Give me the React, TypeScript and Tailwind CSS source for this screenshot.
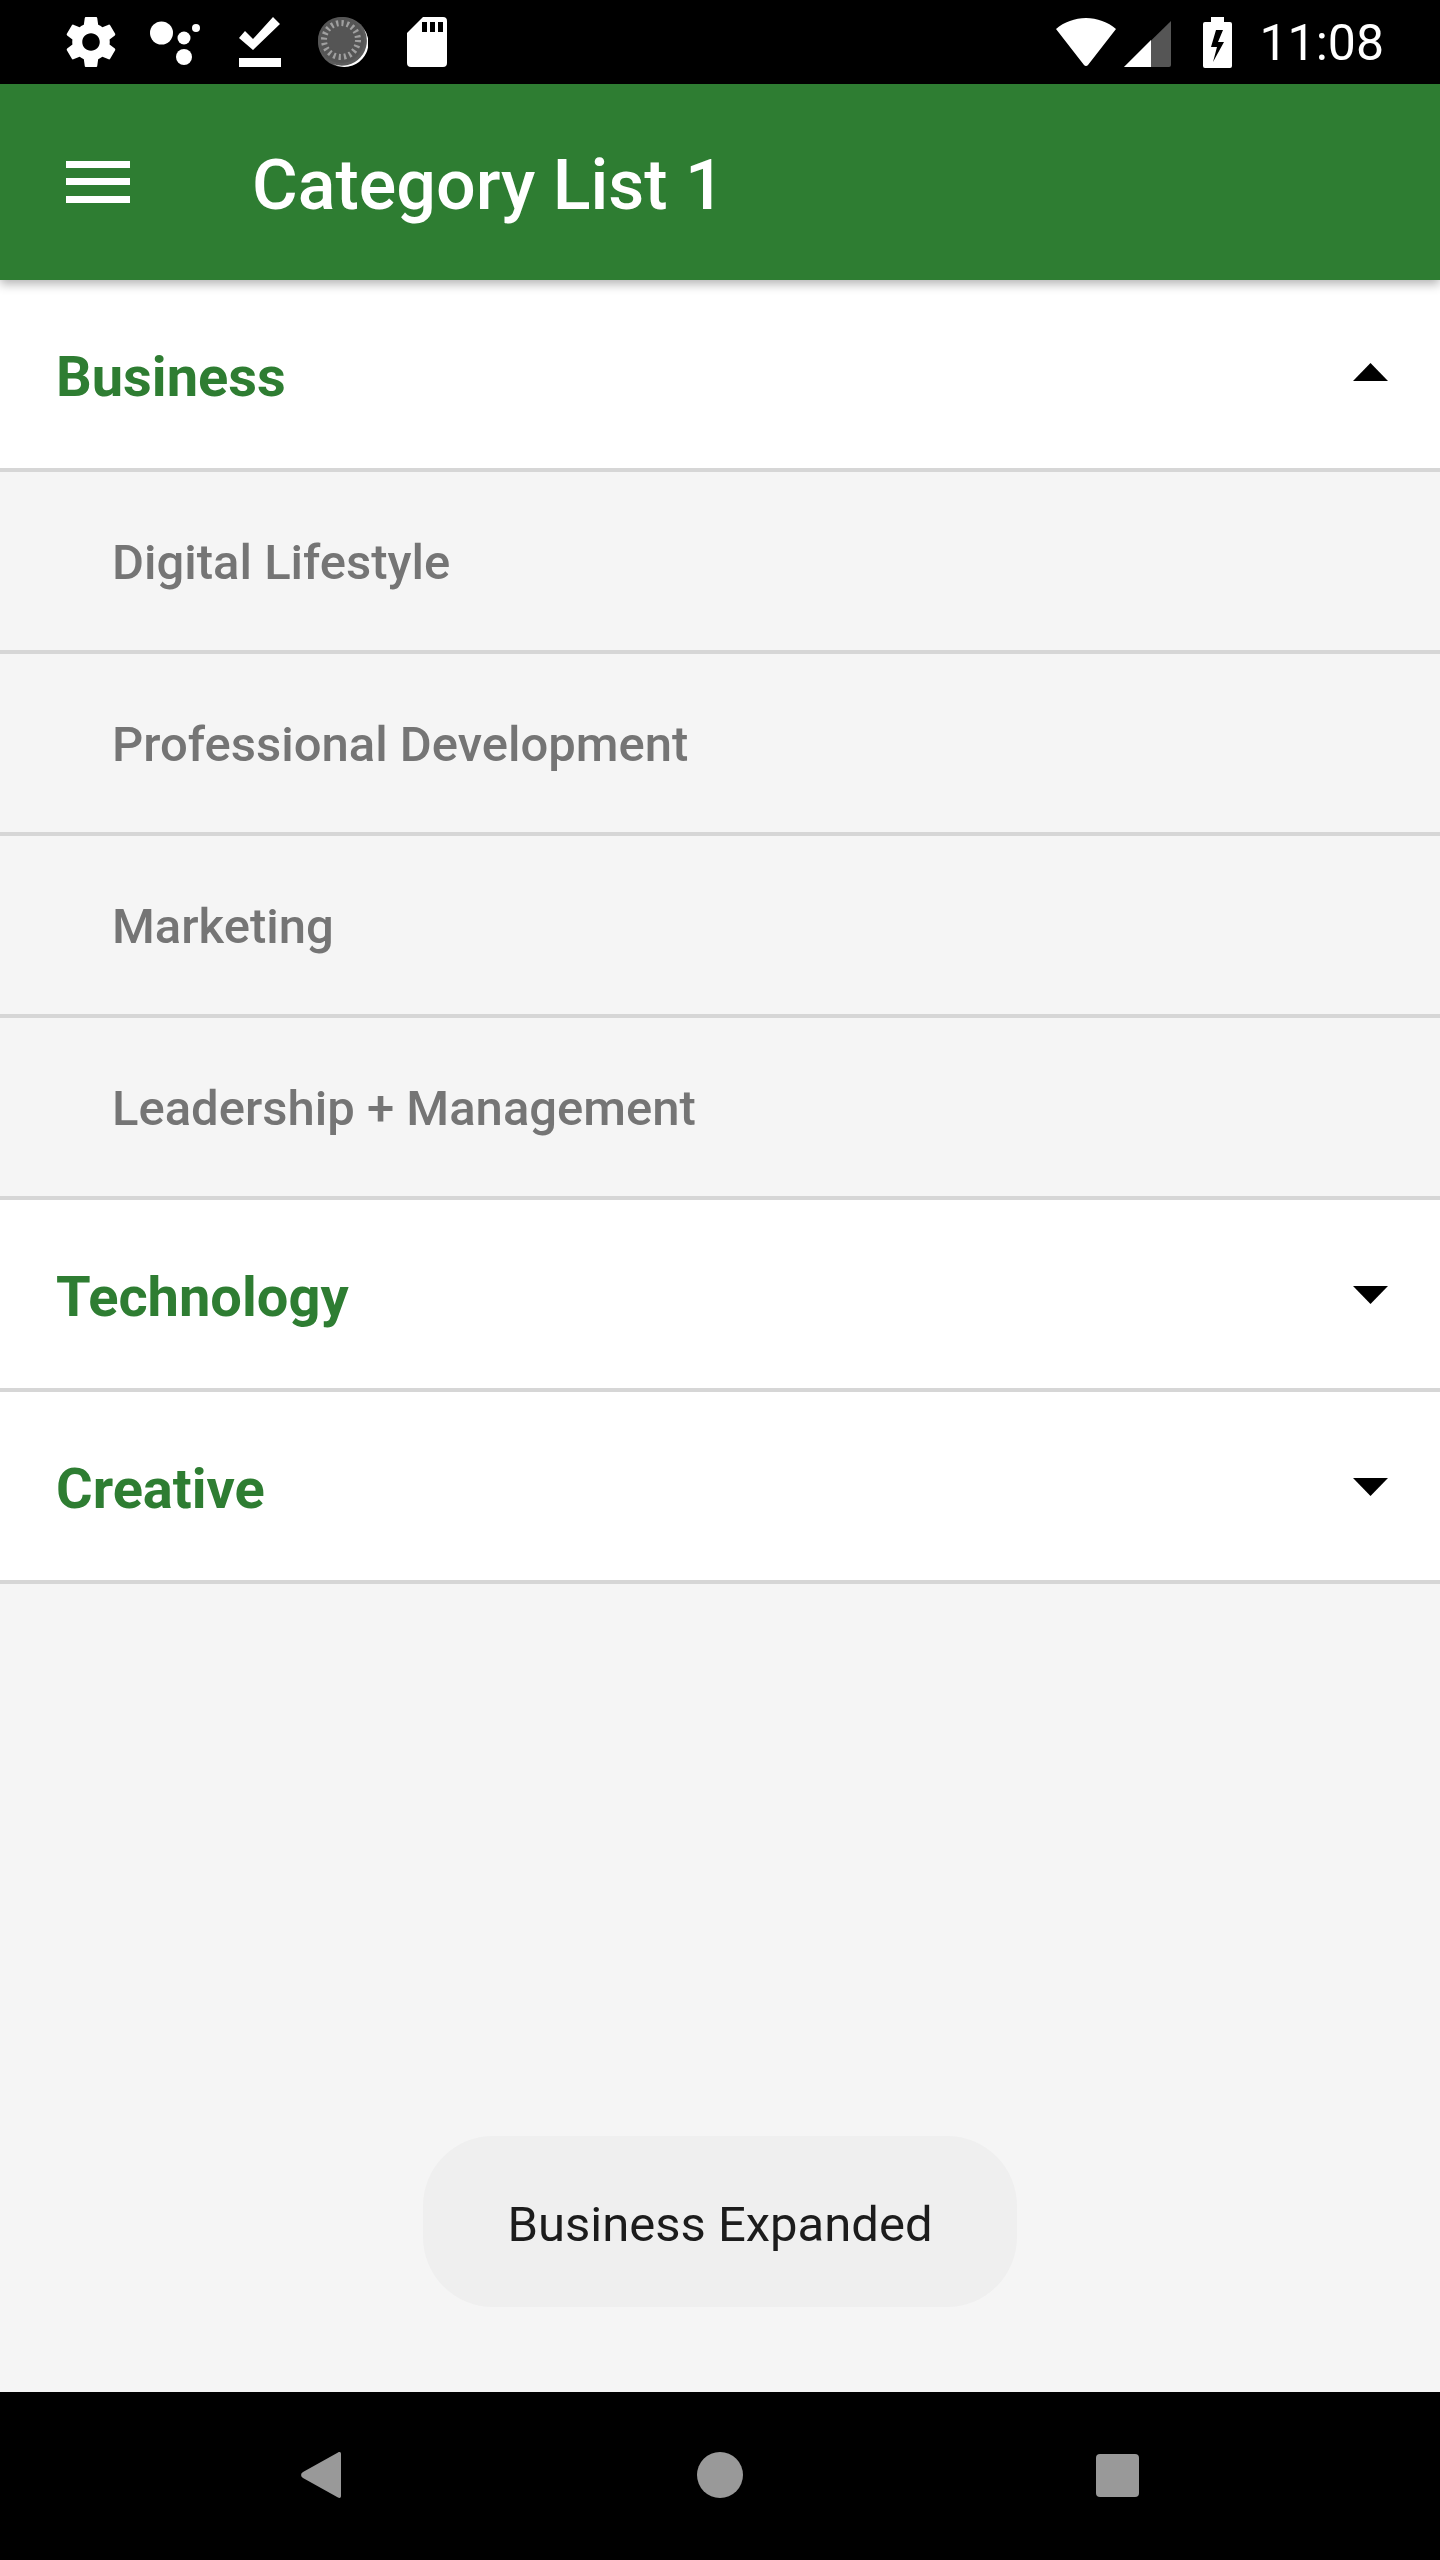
const subCategories = ["Digital Lifestyle", "Professional Development", "Marketing", "Leadership + Management"];

function Arrow({ up }: { up?: boolean }) {
  return (
    <svg width="35" height="18" viewBox="0 0 35 18" className={up ? "-mt-[4px] fill-black" : "mt-[2px] fill-black"}>
      <path d={up ? "M17.5 0L35 18H0z" : "M0 0h35L17.5 18z"} />
    </svg>
  );
}

function CategoryRow({ name, open }: { name: string; open?: boolean }) {
  return (
    <div className="flex h-[192px] items-center justify-between border-b-[4px] border-[#d6d6d6] bg-white pl-[56px] pr-[52px]">
      <span className="pt-[6px] text-[56px] font-bold leading-none text-[#2e7d32]">{name}</span>
      <Arrow up={open} />
    </div>
  );
}

function StatusLeft() {
  return (
    <div className="flex items-center">
      <svg width="50" height="50" viewBox="2 2 20 20" className="ml-[66px] fill-white">
        <path d="M19.43 12.98c.04-.32.07-.64.07-.98s-.03-.66-.07-.98l2.11-1.65c.19-.15.24-.42.12-.64l-2-3.46c-.12-.22-.39-.3-.61-.22l-2.49 1c-.52-.4-1.08-.73-1.69-.98l-.38-2.65C14.46 2.18 14.25 2 14 2h-4c-.25 0-.46.18-.49.42l-.38 2.65c-.61.25-1.17.59-1.69.98l-2.49-1c-.23-.09-.49 0-.61.22l-2 3.46c-.13.22-.07.49.12.64l2.11 1.65c-.04.32-.07.65-.07.98s.03.66.07.98l-2.11 1.65c-.19.15-.24.42-.12.64l2 3.46c.12.22.39.3.61.22l2.49-1c.52.4 1.08.73 1.69.98l.38 2.65c.03.24.24.42.49.42h4c.25 0 .46-.18.49-.42l.38-2.65c.61-.25 1.17-.59 1.69-.98l2.49 1c.23.09.49 0 .61-.22l2-3.46c.12-.22.07-.49-.12-.64l-2.11-1.65zM12 15.5c-1.93 0-3.5-1.57-3.5-3.5s1.57-3.5 3.5-3.5 3.5 1.57 3.5 3.5-1.57 3.5-3.5 3.5z" />
      </svg>
      <svg width="52" height="50" viewBox="0 0 52 50" className="ml-[33px] fill-white">
        <circle cx="12.500" cy="16" r="11.500" />
        <circle cx="35" cy="21" r="6.500" />
        <circle cx="35" cy="40" r="8" />
        <circle cx="47" cy="11" r="4" />
      </svg>
      <svg width="42" height="50" viewBox="0 0 42 50" className="ml-[38px] fill-white">
        <path d="M0 21L6 14L14 22L34 0L41 7L14 33z" />
        <rect x="0" y="41" width="42" height="9" />
      </svg>
      <svg width="50" height="50" viewBox="0 0 50 50" className="ml-[37px]">
        <circle cx="25" cy="25" r="25" fill="#5c5c5c" />
        <path d="M46 12a24 24 0 0 1-31 35a25 25 0 0 0 31-35z" fill="#fff" />
        <circle cx="23" cy="23" r="23" fill="#555" />
        <circle cx="23" cy="23" r="17" fill="none" stroke="#a0a0a0" strokeWidth="6" strokeDasharray="2.200 3.140" />
        <circle cx="23" cy="23" r="13" fill="#555" />
      </svg>
      <svg width="40" height="50" viewBox="0 0 40 50" className="ml-[39px] fill-white">
        <path fillRule="evenodd" d="M16 0h20a4 4 0 0 1 4 4v42a4 4 0 0 1-4 4H4a4 4 0 0 1-4-4V16zM15 5v10h5V5zm8 0v10h5V5zm8 0v10h5V5z" />
      </svg>
    </div>
  );
}

function StatusRight() {
  return (
    <div className="flex items-center">
      <svg width="60" height="48" viewBox="0 0 60 48" className="fill-white">
        <path d="M30 0c11 0 22 4 30 11L32 47c-1 1.300-3 1.300-4 0L0 11C8 4 19 0 30 0z" />
      </svg>
      <svg width="47" height="47" viewBox="0 0 47 47" className="ml-[8px] mt-[3px]">
        <path d="M47 1v44a2 2 0 0 1-2 2H0z" fill="#555" />
        <path d="M27 20v27H0z" fill="#fff" />
      </svg>
      <svg width="29" height="51" viewBox="0 0 29 51" className="ml-[32px] fill-white">
        <path fillRule="evenodd" d="M8 0h13v5h6a2 2 0 0 1 2 2v42a2 2 0 0 1-2 2H2a2 2 0 0 1-2-2V7a2 2 0 0 1 2-2h6zM13 13L8 30h6l-4 15 11-20h-6l5-12z" />
      </svg>
      <span className="ml-[27px] mr-[56px] pt-[2px] text-[50px] leading-none text-white">11:08</span>
    </div>
  );
}

export default function App() {
  return (
    <div className="flex h-[2560px] w-[1440px] flex-col overflow-hidden bg-[#f5f5f5] font-['Roboto',sans-serif]">
      <div className="flex h-[84px] shrink-0 items-center justify-between bg-black">
        <StatusLeft />
        <StatusRight />
      </div>

      <div className="relative z-10 flex h-[196px] shrink-0 items-center bg-[#2e7d32] shadow-[0_4px_10px_rgba(0,0,0,0.3)]">
        <svg width="64" height="42" viewBox="0 0 64 42" className="ml-[66px] fill-white">
          <rect y="0" width="64" height="7" />
          <rect y="17" width="64" height="7" />
          <rect y="35" width="64" height="7" />
        </svg>
        <span className="ml-[122px] pt-[6px] text-[70px] font-medium leading-none text-white">Category List 1</span>
      </div>

      <div className="relative flex-1">
        <CategoryRow name="Business" open />
        {subCategories.map((item) => (
          <div key={item} className="flex h-[182px] items-center border-b-[4px] border-[#d6d6d6] pl-[112px]">
            <span className="pt-[3px] text-[49px] font-medium leading-none text-[#757575]">{item}</span>
          </div>
        ))}
        <CategoryRow name="Technology" />
        <CategoryRow name="Creative" />

        <div className="absolute left-[423px] top-[1856px] flex h-[171px] w-[594px] items-center justify-center rounded-[70px] bg-[#efefef]">
          <span className="pt-[6px] text-[49px] leading-none text-[#1c1c1c]">Business Expanded</span>
        </div>
      </div>

      <div className="flex h-[168px] shrink-0 items-center bg-black pb-[2px] pl-[301px]">
        <svg width="40" height="46" viewBox="0 0 40 46" className="fill-[#999]">
          <path d="M37 .5c1.500-1 3-.5 3 1.500v42c0 2-1.500 2.500-3 1.500L2 26c-2.500-1.500-2.500-4.500 0-6z" />
        </svg>
        <div className="ml-[356px] h-[46px] w-[46px] rounded-full bg-[#999]" />
        <div className="ml-[353px] h-[43px] w-[43px] rounded-[4px] bg-[#999]" />
      </div>
    </div>
  );
}
